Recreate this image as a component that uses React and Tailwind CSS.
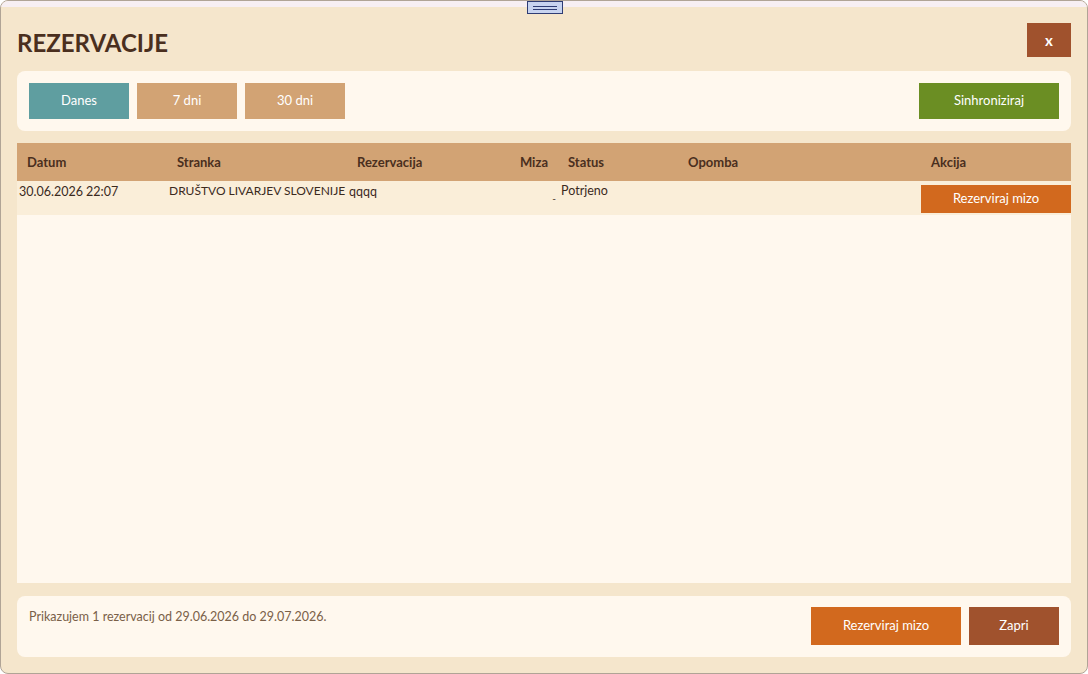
import React from 'react';

const cols = 'grid grid-cols-[150px_180px_130px_81px_120px_243px_150px]';

const rows = [
    { datum: '30.06.2026 22:07', stranka: 'DRUŠTVO LIVARJEV SLOVENIJE', rez: 'qqqq', miza: '-', status: 'Potrjeno', opomba: '' },
];

function App() {
    return (
        <div className="w-[1088px] h-[674px] bg-white font-['Lato','Liberation_Sans',sans-serif]">
            <div className="w-[1088px] h-[674px] rounded-lg border border-[#b0a496] bg-[#f5e6cc] overflow-hidden flex flex-col relative">
                {/* top strip + drag handle */}
                <div className="h-[6px] bg-[#f7eff3] shrink-0"></div>
                <div className="absolute left-[526px] top-0 w-[36px] h-[13px] bg-[#c8d4f0] border border-[#2f3d74] flex flex-col items-center justify-center gap-[2px]">
                    <div className="w-[24px] h-px bg-[#2f3d74]"></div>
                    <div className="w-[24px] h-px bg-[#2f3d74]"></div>
                </div>

                <div className="flex-1 flex flex-col px-4 pb-3">
                    {/* Header */}
                    <div className="flex items-start justify-between pt-4 h-[64px]">
                        <h1 className="mt-[8px] text-[24px] font-bold text-[#4a2f1e] leading-none">REZERVACIJE</h1>
                        <button className="w-[44px] h-[34px] bg-[#a0522d] text-white font-bold text-[15px]">x</button>
                    </div>

                    {/* Filter bar */}
                    <div className="bg-[#fff8ee] rounded-lg h-[60px] px-3 flex items-center justify-between">
                        <div className="flex gap-2">
                            <button className="w-[100px] h-[36px] bg-[#5f9ea0] text-white text-[13px]">Danes</button>
                            <button className="w-[100px] h-[36px] bg-[#d2a374] text-white text-[13px]">7 dni</button>
                            <button className="w-[100px] h-[36px] bg-[#d2a374] text-white text-[13px]">30 dni</button>
                        </div>
                        <button className="w-[140px] h-[36px] bg-[#6b8e23] text-white text-[13px]">Sinhroniziraj</button>
                    </div>

                    {/* Table */}
                    <div className="mt-3 h-[440px] bg-[#fff8ee] flex flex-col">
                        <div className={`${cols} h-[38px] items-center bg-[#d2a374] text-[13px] font-bold text-[#4a2f1e]`}>
                            <div className="pl-[10px] pt-[2px]">Datum</div>
                            <div className="pl-[10px] pt-[2px]">Stranka</div>
                            <div className="pl-[10px] pt-[2px]">Rezervacija</div>
                            <div className="pr-[10px] pt-[2px] text-right">Miza</div>
                            <div className="pl-[10px] pt-[2px]">Status</div>
                            <div className="pl-[10px] pt-[2px]">Opomba</div>
                            <div className="pl-[10px] pt-[2px]">Akcija</div>
                        </div>
                        {rows.map((r, i) => (
                            <div key={i} className={`${cols} h-[34px] bg-[#faeed9] text-[12.5px] text-[#3b2a1e]`}>
                                <div className="pl-[2px] pt-[2px] whitespace-nowrap">{r.datum}</div>
                                <div className="pl-[2px] pt-[1px] whitespace-nowrap text-[12px]">{r.stranka}</div>
                                <div className="pl-[2px] pt-[2px] whitespace-nowrap">{r.rez}</div>
                                <div className="pr-[2px] pt-[10px] text-right text-[10px]">{r.miza}</div>
                                <div className="pl-[3px] pt-[1px]">{r.status}</div>
                                <div className="pl-[2px] pt-[2px]">{r.opomba}</div>
                                <div className="pt-[4px]">
                                    <button className="w-[150px] h-[28px] bg-[#d2691e] text-white text-[13px]">Rezerviraj mizo</button>
                                </div>
                            </div>
                        ))}
                    </div>

                    {/* Footer */}
                    <div className="mt-[13px] bg-[#fff8ee] rounded-lg h-[61px] px-3 flex justify-between">
                        <p className="pt-[12px] text-[12.5px] text-[#7a6048]">Prikazujem 1 rezervacij od 29.06.2026 do 29.07.2026.</p>
                        <div className="flex gap-2 pt-[11px]">
                            <button className="w-[150px] h-[38px] bg-[#d2691e] text-white text-[13px]">Rezerviraj mizo</button>
                            <button className="w-[90px] h-[38px] bg-[#a0522d] text-white text-[13px]">Zapri</button>
                        </div>
                    </div>
                </div>
            </div>
        </div>
    );
}

export default App;
